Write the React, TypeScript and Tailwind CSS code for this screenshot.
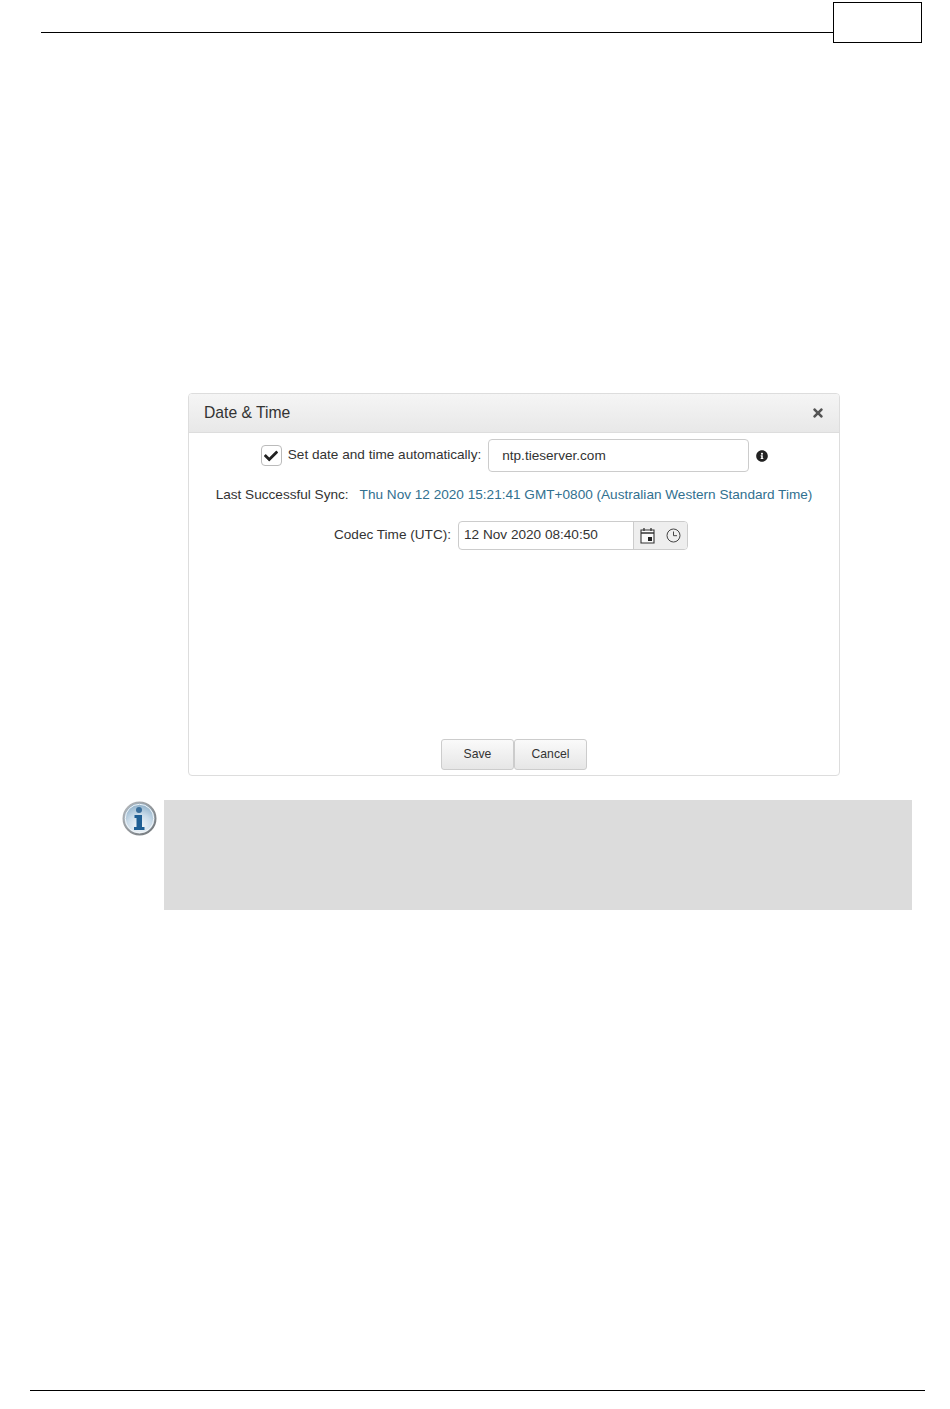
import { FaCheck, FaInfoCircle, FaTimes } from 'react-icons/fa';

function InfoBadge() {
  return (
    <svg width="36" height="36" viewBox="0 0 36 36" className="shrink-0">
      <defs>
        <radialGradient id="glass" cx="50%" cy="75%" r="70%">
          <stop offset="0%" stopColor="#f6f9fb" />
          <stop offset="55%" stopColor="#c9dbe9" />
          <stop offset="100%" stopColor="#8fb0c9" />
        </radialGradient>
        <linearGradient id="rim" x1="0" y1="0" x2="1" y2="1">
          <stop offset="0%" stopColor="#b8bcc0" />
          <stop offset="100%" stopColor="#6f7478" />
        </linearGradient>
      </defs>
      <circle cx="17.5" cy="17.5" r="16" fill="url(#glass)" stroke="url(#rim)" strokeWidth="2" />
      <circle cx="17.5" cy="17.5" r="14.2" fill="none" stroke="#f2f5f7" strokeWidth="1" />
      <circle cx="17" cy="9" r="3" fill="#3a6f9c" />
      <path d="M12.5 14h7.5v12h2.5v3H12v-3h2.5v-9h-2z" fill="#1f5f94" />
    </svg>
  );
}

function CalendarIcon() {
  return (
    <svg width="15" height="17" viewBox="0 0 15 17" fill="none" className="shrink-0">
      <path d="M1 3h13v13H1z" stroke="#333" strokeWidth="1.1" fill="#fafafa" />
      <path d="M1 6h13" stroke="#333" strokeWidth="1.3" />
      <path d="M4 1v3M11 1v3" stroke="#333" strokeWidth="1.3" />
      <rect x="8" y="10" width="4" height="4" fill="#222" />
    </svg>
  );
}

function ClockIcon() {
  return (
    <svg width="15" height="15" viewBox="0 0 15 15" fill="none" className="shrink-0">
      <circle cx="7.5" cy="7.5" r="6.5" stroke="#444" strokeWidth="1" />
      <path d="M7.5 3.5v4.2h3.5" stroke="#444" strokeWidth="1" />
    </svg>
  );
}

export default function App() {
  return (
    <div className="flex flex-col h-[1409px] w-[950px] bg-white font-['Liberation_Sans',Arial,sans-serif] text-[13.6px] text-[#333]">
      {/* page header */}
      <div className="flex items-start pl-[41px] pt-[2px]">
        <div className="w-[792px] h-px bg-black mt-[30px]" />
        <div className="w-[89px] h-[41px] border border-black" />
      </div>

      {/* Date & Time panel */}
      <div className="ml-[188px] mt-[350px] w-[652px] h-[383px] flex flex-col border border-[#ddd] rounded-[4px] overflow-hidden">
        <div className="h-[39px] flex items-center justify-between pl-[15px] pr-[14px] border-b border-[#ddd] bg-gradient-to-b from-[#f5f5f5] to-[#e8e8e8]">
          <span className="text-[15.7px] text-[#333]">Date &amp; Time</span>
          <FaTimes size={14} className="text-[#555]" />
        </div>

        <div className="flex-1 flex flex-col">
          <div className="flex items-center justify-center mt-[6px] pl-[1px]">
            <div className="w-[21px] h-[21px] border border-[#bbb] rounded-[4px] flex items-center justify-center">
              <FaCheck size={14} className="text-[#222]" />
            </div>
            <span className="ml-[6px]">Set date and time automatically:</span>
            <div className="ml-[7px] w-[261px] h-[33px] border border-[#ccc] rounded-[4px] flex items-center pl-[13px] pt-px">
              ntp.tieserver.com
            </div>
            <FaInfoCircle size={12} className="ml-[7px] text-[#222]" />
          </div>

          <div className="flex justify-center mt-[14px] leading-[18px]">
            <span>Last Successful Sync:</span>
            <span className="ml-[11px] text-[#31708f]">Thu Nov 12 2020 15:21:41 GMT+0800 (Australian Western Standard Time)</span>
          </div>

          <div className="flex items-center justify-center mt-[17px] pr-[6px]">
            <span>Codec Time (UTC):</span>
            <div className="ml-[7px] w-[230px] h-[29px] flex border border-[#ccc] rounded-[4px] overflow-hidden">
              <div className="w-[175px] flex items-center pl-[5px] border-r border-[#ccc]">12 Nov 2020 08:40:50</div>
              <div className="flex-1 flex items-center justify-center gap-[11px] bg-[#eee]">
                <CalendarIcon />
                <ClockIcon />
              </div>
            </div>
          </div>

          <div className="mt-auto mb-[5px] flex justify-center text-[12.2px]">
            <button className="w-[73px] h-[31px] border border-[#ccc] rounded-[3px] bg-gradient-to-b from-[#fafafa] to-[#e6e6e6] text-[#333]">Save</button>
            <button className="w-[73px] h-[31px] border border-[#ccc] rounded-[3px] bg-gradient-to-b from-[#fafafa] to-[#e6e6e6] text-[#333]">Cancel</button>
          </div>
        </div>
      </div>

      {/* note */}
      <div className="flex items-start ml-[122px] mt-[24px]">
        <div className="mt-px w-[42px]">
          <InfoBadge />
        </div>
        <div className="w-[748px] h-[110px] bg-[#dcdcdc]" />
      </div>

      {/* page footer */}
      <div className="mt-auto mb-[18px] ml-[30px] w-[895px] h-px bg-black" />
    </div>
  );
}
